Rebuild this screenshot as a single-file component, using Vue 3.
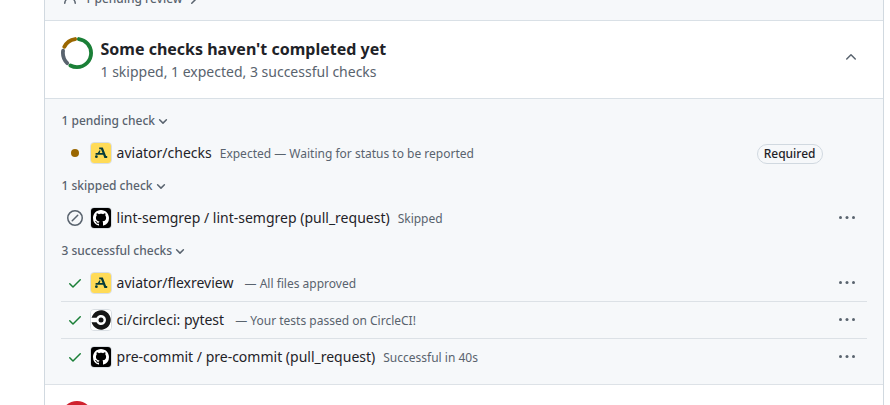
<script setup>
const groups = [
  {
    title: '1 pending check',
    checks: [
      { state: 'pending', app: 'aviator', name: 'aviator/checks', note: 'Expected — Waiting for status to be reported', required: true },
    ],
  },
  {
    title: '1 skipped check',
    checks: [
      { state: 'skipped', app: 'github', name: 'lint-semgrep / lint-semgrep (pull_request)', note: 'Skipped' },
    ],
  },
  {
    title: '3 successful checks',
    checks: [
      { state: 'success', app: 'aviator', name: 'aviator/flexreview', note: '— All files approved', wide: true },
      { state: 'success', app: 'circle', name: 'ci/circleci: pytest', note: '— Your tests passed on CircleCI!', wide: true },
      { state: 'success', app: 'github', name: 'pre-commit / pre-commit (pull_request)', note: 'Successful in 40s' },
    ],
  },
]
</script>

<template>
  <main class="viewport">
    <section class="card">
      <div class="reviews">
        <svg class="person" width="16" height="16" viewBox="0 0 16 16"><path d="M10.561 8.073a6.005 6.005 0 0 1 3.432 5.142.75.75 0 1 1-1.498.07 4.5 4.5 0 0 0-8.99 0 .75.75 0 0 1-1.498-.07 6.004 6.004 0 0 1 3.431-5.142 3.999 3.999 0 1 1 5.123 0ZM10.5 5a2.5 2.5 0 1 0-5 0 2.5 2.5 0 0 0 5 0Z" /></svg>
        <span>1 pending review</span>
        <svg width="16" height="16" viewBox="0 0 16 16"><path d="M6.22 3.22a.75.75 0 0 1 1.06 0l4.25 4.25a.75.75 0 0 1 0 1.06l-4.25 4.25a.751.751 0 0 1-1.06-1.06L9.94 8 6.22 4.28a.75.75 0 0 1 0-1.06Z" /></svg>
      </div>

      <header class="summary">
        <svg class="donut" width="32" height="32" viewBox="0 0 32 32">
          <g fill="none" stroke-width="3.8" stroke-linecap="round" transform="rotate(-90 16 16)">
            <circle cx="16" cy="16" r="14.1" pathLength="360" stroke="#1a7f37" stroke-dasharray="200 160" stroke-dashoffset="-8" />
            <circle cx="16" cy="16" r="14.1" pathLength="360" stroke="#59636e" stroke-dasharray="56 304" stroke-dashoffset="-224" />
            <circle cx="16" cy="16" r="14.1" pathLength="360" stroke="#9a6700" stroke-dasharray="56 304" stroke-dashoffset="-296" />
          </g>
        </svg>
        <div class="headline">
          <h2>Some checks haven't completed yet</h2>
          <p>1 skipped, 1 expected, 3 successful checks</p>
        </div>
        <svg class="collapse" width="16" height="16" viewBox="0 0 16 16"><path d="M3.22 10.53a.749.749 0 0 1 0-1.06l4.25-4.25a.749.749 0 0 1 1.06 0l4.25 4.25a.749.749 0 1 1-1.06 1.06L8 6.811 4.28 10.53a.749.749 0 0 1-1.06 0Z" /></svg>
      </header>

      <div class="groups">
        <div v-for="group in groups" :key="group.title">
          <h3>
            <span>{{ group.title }}</span>
            <svg width="12" height="12" viewBox="0 0 12 12"><path d="M2.6 4.7 6 8.1l3.4-3.4" fill="none" stroke="#59636e" stroke-width="1.5" stroke-linecap="round" stroke-linejoin="round" /></svg>
          </h3>
          <ul>
            <li v-for="check in group.checks" :key="check.name">
              <svg class="state" :class="check.state" width="16" height="16" viewBox="0 0 16 16">
                <circle v-if="check.state === 'pending'" cx="8" cy="8" r="4" />
                <path v-else-if="check.state === 'skipped'" d="M8 0a8 8 0 1 1 0 16A8 8 0 0 1 8 0ZM1.5 8a6.5 6.5 0 1 0 13 0 6.5 6.5 0 0 0-13 0Zm9.78-2.22-5.5 5.5a.749.749 0 0 1-1.275-.326.749.749 0 0 1 .215-.734l5.5-5.5a.751.751 0 0 1 1.042.018.751.751 0 0 1 .018 1.042Z" />
                <path v-else d="M13.78 4.22a.75.75 0 0 1 0 1.06l-7.25 7.25a.75.75 0 0 1-1.06 0L2.22 9.28a.751.751 0 0 1 .018-1.042.751.751 0 0 1 1.042-.018L6 10.94l6.72-6.72a.75.75 0 0 1 1.06 0Z" />
              </svg>

              <span class="avatar">
                <svg v-if="check.app === 'aviator'" width="20" height="20" viewBox="0 0 20 20">
                  <rect width="20" height="20" fill="#ffdb57" />
                  <path d="M8.2 4.4h3.6l3.3 8.7h1.1v1.8h-2.8l-1.2-3.1H4.6v-1.7h2.1l1.8-2.8 1 .5-.8 2.3h2.8l-1.5-3.9H8.2Z" fill="#073b3a" />
                  <circle cx="5.4" cy="13.7" r="1.4" fill="#073b3a" />
                </svg>
                <svg v-else-if="check.app === 'circle'" width="20" height="20" viewBox="0 0 20 20">
                  <rect width="20" height="20" fill="#fff" />
                  <path d="M.6 7.8A9.7 9.7 0 1 1 .6 12.2H5.5A5 5 0 1 0 5.5 7.8Z" fill="#161616" />
                  <circle cx="10" cy="10" r="2.5" fill="#161616" />
                </svg>
                <svg v-else width="20" height="20" viewBox="0 0 20 20">
                  <rect width="20" height="20" fill="#000" />
                  <path transform="translate(2 2)" fill="#fff" d="M8 0c4.42 0 8 3.58 8 8a8.013 8.013 0 0 1-5.45 7.59c-.4.08-.55-.17-.55-.38 0-.27.01-1.13.01-2.2 0-.75-.25-1.23-.54-1.48 1.78-.2 3.65-.88 3.65-3.95 0-.88-.31-1.59-.82-2.15.08-.2.36-1.02-.08-2.12 0 0-.67-.22-2.2.82-.64-.18-1.32-.27-2-.27-.68 0-1.36.09-2 .27-1.53-1.03-2.2-.82-2.2-.82-.44 1.1-.16 1.92-.08 2.12-.51.56-.82 1.28-.82 2.15 0 3.06 1.86 3.75 3.64 3.95-.23.2-.44.55-.51 1.07-.46.21-1.61.55-2.33-.66-.15-.24-.6-.83-1.23-.82-.67.01-.27.38.01.53.34.19.73.9.82 1.13.16.45.68 1.31 2.69.94 0 .67.01 1.3.01 1.49 0 .21-.15.45-.55.38A7.995 7.995 0 0 1 0 8c0-4.42 3.58-8 8-8Z" />
                </svg>
              </span>

              <span class="name">{{ check.name }}</span>
              <span class="note" :class="{ wide: check.wide }">{{ check.note }}</span>
              <span v-if="check.required" class="label">Required</span>
              <svg v-else class="more" width="18" height="16" viewBox="0 0 18 16"><circle cx="2.5" cy="7.5" r="1.5" /><circle cx="9" cy="7.5" r="1.5" /><circle cx="15.5" cy="7.5" r="1.5" /></svg>
            </li>
          </ul>
        </div>
      </div>

      <footer class="next"><span class="blocked"></span></footer>
    </section>
  </main>
</template>

<style>
body {
  margin: 0;
  background: #fff;
}
</style>

<style scoped>
.viewport {
  box-sizing: border-box;
  width: 890px;
  height: 405px;
  padding: 0 6px 0 44px;
  overflow: hidden;
  color: #1f2328;
  font-family: "Noto Sans", sans-serif;
  font-size: 14px;
}

svg {
  display: block;
  flex: none;
  fill: #59636e;
}

h2, h3, p, ul {
  margin: 0;
  padding: 0;
}

.card {
  box-sizing: border-box;
  height: 405px;
  border: solid #d1d9e0;
  border-width: 0 1px;
  overflow: hidden;
}

.reviews {
  box-sizing: border-box;
  display: flex;
  align-items: flex-end;
  height: 21px;
  padding: 0 17px 13px;
  border-bottom: 1px solid #d9e0e6;
  background: #f6f8fa;
  color: #59636e;
  font-size: 12px;
  font-weight: 500;
  line-height: 16px;
}

.reviews span {
  margin: 0 3px 0 6.5px;
}

.reviews .person {
  margin-bottom: 1px;
}

.summary {
  box-sizing: border-box;
  display: flex;
  height: 78px;
  padding: 16px 24px 0 16px;
  border-bottom: 1px solid #d9e0e6;
}

.headline {
  flex: 1;
  margin-left: 7.5px;
}

h2 {
  font-size: 16px;
  font-weight: 700;
  line-height: 24px;
}

.headline p {
  color: #59636e;
  line-height: 21px;
}

.collapse {
  margin-top: 12px;
}

.groups {
  box-sizing: border-box;
  height: 286px;
  padding: 7px 16px 0;
  border-bottom: 1px solid #dde2e7;
  background: #f6f8fa;
}

h3 {
  display: flex;
  align-items: center;
  gap: 2px;
  height: 29px;
  padding-left: 0.5px;
  color: #59636e;
  font-size: 12px;
  font-weight: 500;
}

ul {
  list-style: none;
}

li {
  display: flex;
  align-items: center;
  height: 36px;
}

li + li {
  border-top: 1px solid #dce1e6;
}

.state {
  margin: 0 7px 0 6px;
}

.pending {
  fill: #9a6700;
}

.success {
  fill: #1a7f37;
}

.avatar {
  flex: none;
  width: 20px;
  height: 20px;
  margin-right: 4.6px;
  border: 1px solid #d9dee3;
  border-radius: 4px;
  overflow: hidden;
}

.name {
  padding-bottom: 1px;
}

.note {
  margin-left: 8px;
  color: #59636e;
  font-size: 12px;
}

.note.wide {
  margin-left: 11.1px;
}

.label {
  margin: 1px 44px 0 auto;
  padding: 0 6.5px 0 6px;
  border: 1px solid #d1d9e0;
  border-radius: 10px;
  font-size: 12px;
  font-weight: 500;
  line-height: 18px;
}

.more {
  margin: 0 11px 0 auto;
}

.next {
  padding: 16px;
}

.blocked {
  display: block;
  width: 32px;
  height: 32px;
  border-radius: 50%;
  background: #cf222e;
}
</style>
